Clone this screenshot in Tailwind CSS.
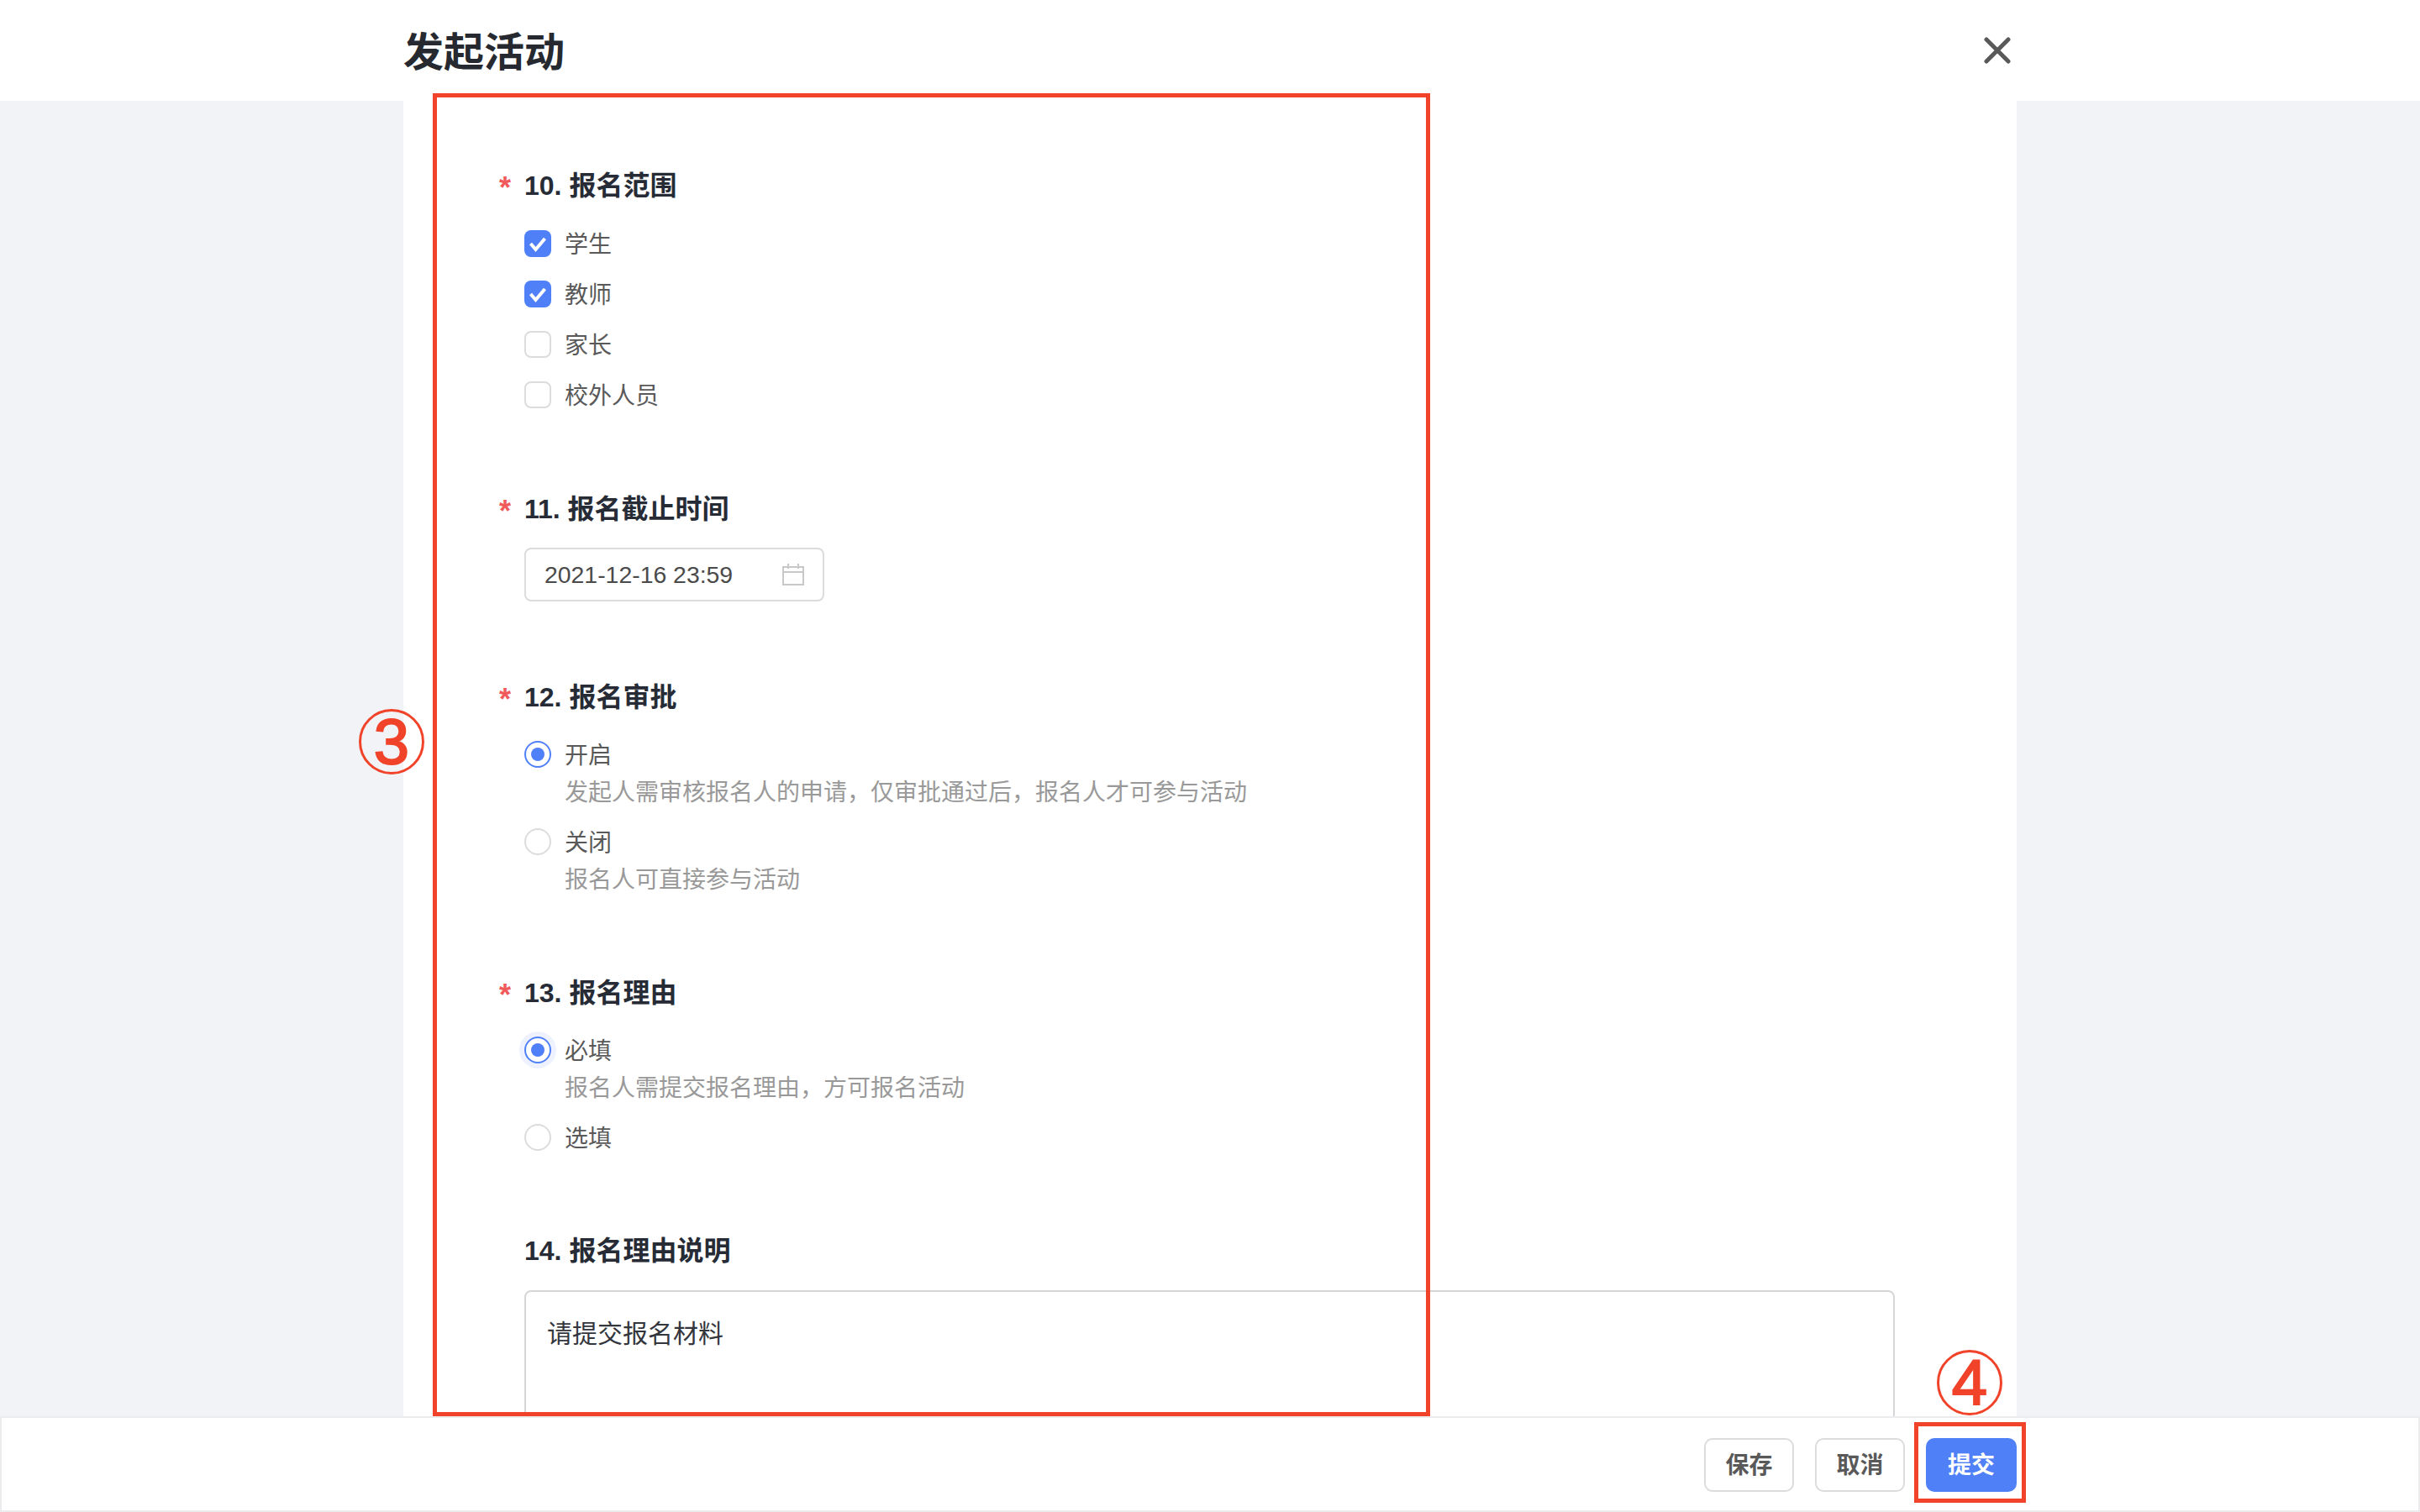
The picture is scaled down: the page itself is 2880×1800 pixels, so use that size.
<!doctype html>
<html lang="zh">
<head>
<meta charset="utf-8">
<title>发起活动</title>
<script src="https://cdn.jsdelivr.net/npm/@tailwindcss/browser@4"></script>
</head>
<body class="font-['Liberation_Sans','Noto_Sans_CJK_SC',sans-serif]">
<div class="relative h-screen flex flex-col overflow-hidden bg-[#f2f3f7]">
	<header class="h-[120px] shrink-0 bg-white flex justify-center">
		<div class="w-[1920px] flex items-center justify-between">
			<h1 class="pt-[6px] text-[48px] leading-[64px] font-bold text-[#262a30]">发起活动</h1>
			<svg class="mr-[7px] w-[32px] h-[32px] text-[#595959]" viewBox="0 0 32 32" fill="none" stroke="currentColor" stroke-width="5" stroke-linecap="round"><path d="M3 3l26 26M29 3L3 29"/></svg>
		</div>
	</header>

	<main class="flex-1 min-h-0 overflow-hidden">
		<div class="w-[1920px] h-full mx-auto bg-white pl-[144px] pt-[78px]">
			<section class="mb-[91px]">
				<h2 class="relative h-[44px] leading-[46px] text-[32px] font-bold text-[#262b36]"><span class="absolute left-[-30px] top-[3px] text-[36px] font-bold text-[#f05a5a]">*</span>10. 报名范围</h2>
				<div class="mt-[26px] flex flex-col gap-[16px] text-[28px] text-[#595959]">
					<div class="h-[44px] flex items-center gap-[16px]">
						<span class="w-[32px] h-[32px] rounded-[8px] bg-[#5080f8] flex items-center justify-center"><svg class="w-[22px] h-[22px]" viewBox="0 0 22 22" fill="none" stroke="#fff" stroke-width="4"><path d="M2.5 11l6 7L19.5 5"/></svg></span>
						<span class="pt-[4px]">学生</span>
					</div>
					<div class="h-[44px] flex items-center gap-[16px]">
						<span class="w-[32px] h-[32px] rounded-[8px] bg-[#5080f8] flex items-center justify-center"><svg class="w-[22px] h-[22px]" viewBox="0 0 22 22" fill="none" stroke="#fff" stroke-width="4"><path d="M2.5 11l6 7L19.5 5"/></svg></span>
						<span class="pt-[4px]">教师</span>
					</div>
					<div class="h-[44px] flex items-center gap-[16px]">
						<span class="w-[32px] h-[32px] rounded-[8px] border-2 border-[#dcdcdc] bg-white"></span>
						<span class="pt-[4px]">家长</span>
					</div>
					<div class="h-[44px] flex items-center gap-[16px]">
						<span class="w-[32px] h-[32px] rounded-[8px] border-2 border-[#dcdcdc] bg-white"></span>
						<span class="pt-[4px]">校外人员</span>
					</div>
				</div>
			</section>

			<section class="mb-[91px]">
				<h2 class="relative h-[44px] leading-[46px] text-[32px] font-bold text-[#262b36]"><span class="absolute left-[-30px] top-[3px] text-[36px] font-bold text-[#f05a5a]">*</span>11. 报名截止时间</h2>
				<div class="mt-[25px] w-[357px] h-[64px] rounded-[8px] border-2 border-[#dcdcdc] pl-[22px] pr-[22px] flex items-center justify-between text-[28.4px] text-[#4a4a4a]">
					<span>2021-12-16 23:59</span>
					<svg class="w-[26px] h-[26px] text-[#c8c8c8]" viewBox="0 0 26 26" fill="none" stroke="currentColor" stroke-width="2"><path d="M1 4h24v21H1zM1 10h24M7 0v6M19 0v6"/></svg>
				</div>
			</section>

			<section class="mb-[91px]">
				<h2 class="relative h-[44px] leading-[46px] text-[32px] font-bold text-[#262b36]"><span class="absolute left-[-30px] top-[3px] text-[36px] font-bold text-[#f05a5a]">*</span>12. 报名审批</h2>
				<div class="mt-[25px] h-[44px] flex items-center gap-[16px] text-[28px] text-[#595959]">
					<span class="w-[32px] h-[32px] rounded-full border-2 border-[#5080f8] flex items-center justify-center"><span class="w-[16px] h-[16px] rounded-full bg-[#5080f8]"></span></span>
					<span class="pt-[4px]">开启</span>
				</div>
				<p class="pl-[48px] h-[44px] leading-[48px] text-[28px] text-[#999999]">发起人需审核报名人的申请，仅审批通过后，报名人才可参与活动</p>
				<div class="mt-[16px] h-[44px] flex items-center gap-[16px] text-[28px] text-[#595959]">
					<span class="w-[32px] h-[32px] rounded-full border-2 border-[#dcdcdc]"></span>
					<span class="pt-[4px]">关闭</span>
				</div>
				<p class="pl-[48px] h-[44px] leading-[48px] text-[28px] text-[#999999]">报名人可直接参与活动</p>
			</section>

			<section class="mb-[91px]">
				<h2 class="relative h-[44px] leading-[46px] text-[32px] font-bold text-[#262b36]"><span class="absolute left-[-30px] top-[3px] text-[36px] font-bold text-[#f05a5a]">*</span>13. 报名理由</h2>
				<div class="mt-[25px] h-[44px] flex items-center gap-[16px] text-[28px] text-[#595959]">
					<span class="w-[32px] h-[32px] rounded-full border-2 border-[#5080f8] ring-[6px] ring-[#5080f8]/10 flex items-center justify-center"><span class="w-[16px] h-[16px] rounded-full bg-[#5080f8]"></span></span>
					<span class="pt-[4px]">必填</span>
				</div>
				<p class="pl-[48px] h-[44px] leading-[48px] text-[28px] text-[#999999]">报名人需提交报名理由，方可报名活动</p>
				<div class="mt-[16px] h-[44px] flex items-center gap-[16px] text-[28px] text-[#595959]">
					<span class="w-[32px] h-[32px] rounded-full border-2 border-[#dcdcdc]"></span>
					<span class="pt-[4px]">选填</span>
				</div>
			</section>

			<section>
				<h2 class="h-[44px] leading-[44px] text-[32px] font-bold text-[#262b36]">14. 报名理由说明</h2>
				<div class="mt-[25px] w-[1631px] h-[240px] rounded-[8px] border-2 border-[#d6d6d9] pl-[25px] pt-[28px] text-[30px] leading-[44px] text-[#33363d]">请提交报名材料</div>
			</section>
		</div>
	</main>

	<footer class="h-[114px] shrink-0 bg-white border-2 border-[#ececee] pr-[478px] pt-[2px] flex items-center justify-end gap-[25px] text-[28px] font-bold">
		<button class="w-[107px] h-[64px] rounded-[10px] border-2 border-[#dcdcdc] bg-white pt-[2px] text-[#595959]">保存</button>
		<button class="w-[107px] h-[64px] rounded-[10px] border-2 border-[#dcdcdc] bg-white pt-[2px] text-[#595959]">取消</button>
		<button class="w-[108px] h-[64px] rounded-[10px] bg-[#5080f8] pt-[2px] text-white">提交</button>
	</footer>

	<!-- annotations drawn over the screenshot -->
	<div class="absolute left-[515px] top-[111px] w-[1187px] h-[1575px] border-[5px] border-[#f0432a]"></div>
	<div class="absolute left-[2278px] top-[1693px] w-[133px] h-[96px] border-[5px] border-[#f0432a]"></div>
	<div class="absolute left-[427px] top-[844px] w-[78px] h-[78px] rounded-full border-[3px] border-[#f0432a] flex items-center justify-center text-[76px] leading-none text-[#f0432a] [-webkit-text-stroke:2px_#f0432a]">3</div>
	<div class="absolute left-[2305px] top-[1607px] w-[78px] h-[78px] rounded-full border-[3px] border-[#f0432a] flex items-center justify-center text-[76px] leading-none text-[#f0432a] [-webkit-text-stroke:2px_#f0432a]">4</div>
</div>
</body>
</html>
